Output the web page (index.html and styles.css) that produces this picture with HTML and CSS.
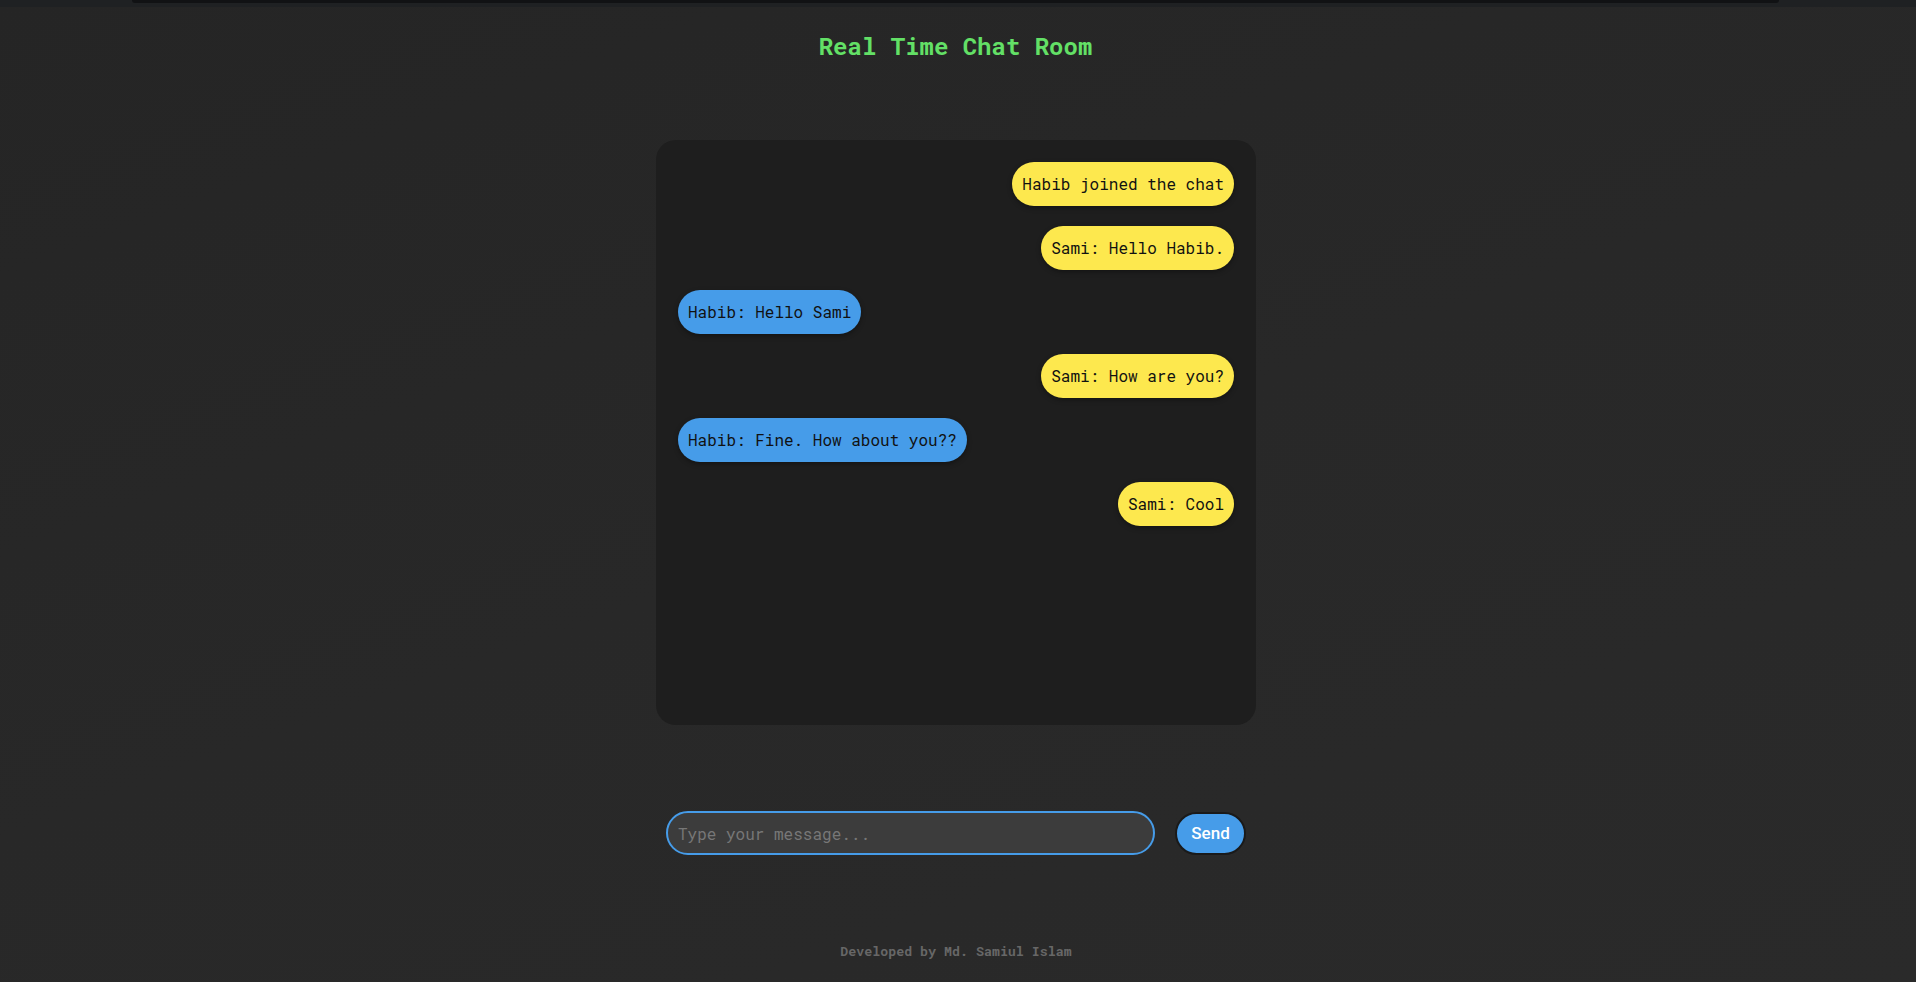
FILE: index.html
```html
<!DOCTYPE html>
<html lang="en">
<head>
<meta charset="utf-8">
<title>Real Time Chat Room</title>
<link rel="stylesheet" href="styles.css">
</head>
<body>
<div class="topbar"><div class="topbar-inner"></div></div>
<h1 class="title">Real Time Chat Room</h1>
<main class="chat-box">
  <div class="msg mine">Habib joined the chat</div>
  <div class="msg mine">Sami: Hello Habib.</div>
  <div class="msg other">Habib: Hello Sami</div>
  <div class="msg mine">Sami: How are you?</div>
  <div class="msg other">Habib: Fine. How about you??</div>
  <div class="msg mine">Sami: Cool</div>
</main>
<form class="input-row" onsubmit="return false">
  <input class="msg-input" type="text" placeholder="Type your message...">
  <button class="send-btn" type="submit">Send</button>
</form>
<footer class="footer">Developed by Md. Samiul Islam</footer>
</body>
</html>
```
FILE: styles.css
```css
html, body {
  margin: 0;
  padding: 0;
}
body {
  min-height: 982px;
  background: linear-gradient(160deg, #252525 0%, #282828 50%, #2a2a2a 100%);
  font-family: "Roboto Mono", "DejaVu Sans Mono", "Liberation Mono", monospace;
  color: #ddd;
  display: flex;
  flex-direction: column;
  align-items: center;
}
.topbar {
  align-self: stretch;
  height: 7px;
  background: #1f2123;
  display: flex;
}
.topbar-inner {
  flex: 1;
  margin: 0 137px 0 132px;
  height: 3px;
  background: #111214;
  border-radius: 0 0 3px 3px;
}
.title {
  margin: 0 0 0 -5px;
  padding-top: 25px;
  font-size: 24px;
  line-height: 28px;
  font-weight: bold;
  color: #63e066;
}
.chat-box {
  box-sizing: border-box;
  width: 600px;
  height: 585px;
  margin: 80px 0 0 -4px;
  padding: 22px;
  background: #1e1e1e;
  border-radius: 20px;
  display: flex;
  flex-direction: column;
  gap: 20px;
}
.msg {
  padding: 12px 10px;
  font-size: 16px;
  line-height: 20px;
  color: #111;
  border-radius: 22px;
  box-shadow: 0 2px 5px rgba(0, 0, 0, 0.35);
}
.mine {
  align-self: flex-end;
  background: #fde84e;
}
.other {
  align-self: flex-start;
  background: #469ce9;
}
.input-row {
  margin: 86px 0 0 -4px;
  display: flex;
  align-items: center;
  gap: 20px;
}
.msg-input {
  box-sizing: border-box;
  width: 489px;
  height: 44px;
  padding: 0 10px;
  border: 2px solid #469ce9;
  border-radius: 22px;
  background: #3c3c3c;
  color: #eee;
  font-family: "Roboto Mono", "DejaVu Sans Mono", "Liberation Mono", monospace;
  font-size: 16px;
  outline: none;
}
.msg-input::placeholder {
  color: #777;
}
.send-btn {
  box-sizing: border-box;
  width: 71px;
  height: 43px;
  border: 2px solid #1a1a1a;
  border-radius: 22px;
  background: #469ce9;
  color: #fff;
  font-family: Roboto, "Noto Sans", sans-serif;
  font-size: 17px;
  font-weight: 500;
  cursor: pointer;
}
.footer {
  margin: 88px 0 0 -4px;
  font-size: 13.3px;
  line-height: 16px;
  font-weight: bold;
  color: #676767;
}
```
